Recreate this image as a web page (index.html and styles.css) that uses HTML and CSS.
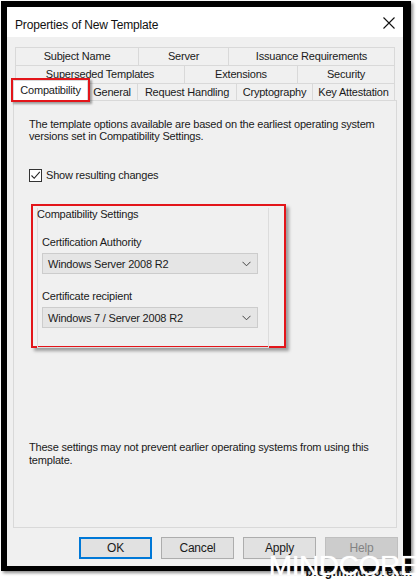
FILE: index.html
```html
<!DOCTYPE html>
<html>
<head>
<meta charset="utf-8">
<link rel="stylesheet" href="styles.css">
</head>
<body>
<div class="screen">
  <div class="frame">
    <div class="dialog">
      <div class="titlebar">
        <span class="title">Properties of New Template</span>
        <svg class="close" width="12" height="12" viewBox="0 0 12 12"><path d="M0.5 0.5L11.5 11.5M11.5 0.5L0.5 11.5" stroke="#111" stroke-width="1.1" fill="none"/></svg>
      </div>
      <div class="body">
        <div class="tabs">
          <div class="tabrow r1">
            <div class="tab">Subject Name</div>
            <div class="tab">Server</div>
            <div class="tab">Issuance Requirements</div>
          </div>
          <div class="tabrow r2">
            <div class="tab">Superseded Templates</div>
            <div class="tab">Extensions</div>
            <div class="tab">Security</div>
          </div>
          <div class="tabrow r3">
            <div class="tab sel">Compatibility</div>
            <div class="tab">General</div>
            <div class="tab">Request Handling</div>
            <div class="tab">Cryptography</div>
            <div class="tab">Key Attestation</div>
          </div>
        </div>
        <div class="page">
          <p class="intro">The template options available are based on the earliest operating system versions set in Compatibility Settings.</p>
          <div class="check">
            <span class="box"><svg width="11" height="11" viewBox="0 0 11 11"><path d="M1.5 5.5L4.2 8.3L9.8 1.8" stroke="#222" stroke-width="1.1" fill="none"/></svg></span>
            <span>Show resulting changes</span>
          </div>
          <div class="marked">
            <div class="group">
              <div class="legend">Compatibility Settings</div>
              <div class="field-label">Certification Authority</div>
              <div class="select"><span>Windows Server 2008 R2</span><svg width="9" height="6" viewBox="0 0 9 6"><path d="M0.5 0.8L4.5 4.8L8.5 0.8" stroke="#444" stroke-width="1" fill="none"/></svg></div>
              <div class="field-label second">Certificate recipient</div>
              <div class="select"><span>Windows 7 / Server 2008 R2</span><svg width="9" height="6" viewBox="0 0 9 6"><path d="M0.5 0.8L4.5 4.8L8.5 0.8" stroke="#444" stroke-width="1" fill="none"/></svg></div>
            </div>
          </div>
          <p class="note">These settings may not prevent earlier operating systems from using this template.</p>
        </div>
        <div class="buttons">
          <div class="btn default">OK</div>
          <div class="btn">Cancel</div>
          <div class="btn">Apply</div>
          <div class="btn disabled">Help</div>
        </div>
      </div>
    </div>
  </div>
  <div class="watermark">
    <span class="wm-sub">blog.mindcore.dk</span>
    <span class="wm-main">MINDCORE</span>
  </div>
</div>
</body>
</html>
```
FILE: styles.css
```css
* { box-sizing: border-box; }
html, body { margin: 0; padding: 0; background: #fff; }
body {
  font-family: "Liberation Sans", Arial, sans-serif;
  font-size: 11px;
  letter-spacing: -0.2px;
  color: #1a1a1a;
}
.screen { position: relative; width: 419px; height: 580px; overflow: hidden; }
.frame {
  margin: 1px 0 0 1px;
  width: 410px;
  height: 570px;
  border: 6px solid #000;
  border-right-width: 8px;
  border-bottom-width: 5px;
  box-shadow: 2px 2px 3px rgba(0,0,0,0.45);
}
.dialog {
  width: 100%;
  height: 100%;
  background: #f0f0f0;
  display: flex;
  flex-direction: column;
}
.titlebar {
  height: 30px;
  background: #fff;
  display: flex;
  align-items: flex-start;
  justify-content: space-between;
  padding: 11px 8px 0 8px;
  flex: none;
}
.title { font-size: 12px; letter-spacing: -0.15px; line-height: 14px; color: #111; }
.close { margin-top: -1px; }
.body {
  flex: 1;
  display: flex;
  flex-direction: column;
  padding: 10px 6px 0 6px;
}
.tabs { display: flex; flex-direction: column; padding-left: 2px; }
.tabrow { display: flex; height: 18px; }
.tab {
  height: 18px;
  border-top: 1px solid #d9d9d9;
  border-right: 1px solid #d9d9d9;
  background: #f0f0f0;
  text-align: center;
  line-height: 17px;
  white-space: nowrap;
}
.tab:first-child { border-left: 1px solid #d9d9d9; }
.r1 .tab:nth-child(1) { width: 124px; }
.r1 .tab:nth-child(2) { width: 90px; }
.r1 .tab:nth-child(3) { width: 166px; }
.r2 .tab:nth-child(1) { width: 170px; }
.r2 .tab:nth-child(2) { width: 113px; }
.r2 .tab:nth-child(3) { width: 97px; }
.r3 .tab:nth-child(1) { width: 72px; }
.r3 .tab:nth-child(2) { width: 51px; }
.r3 .tab:nth-child(3) { width: 99px; }
.r3 .tab:nth-child(4) { width: 76px; }
.r3 .tab:nth-child(5) { width: 82px; }
.r3 .tab.sel {
  position: relative;
  z-index: 2;
  width: 75px;
  height: 21px;
  margin: -3px -1px -1px -2px;
  background: #fff;
  border: 1px solid #d9d9d9;
  border-bottom: none;
  line-height: 19px;
}
.tab.sel::after {
  content: "";
  position: absolute;
  left: -3px; top: -3px; right: -3px; bottom: -1px;
  border: 2px solid #e3151a;
  box-shadow: 2px 2px 2px rgba(0,0,0,0.35);
}
.page {
  margin-top: -1px;
  height: 428px;
  border: 1px solid #d9d9d9;
  background: #f0f0f0;
  padding: 17px 15px 0 15px;
  display: flex;
  flex-direction: column;
  align-items: flex-start;
}
.intro, .note { margin: 0; line-height: 12px; width: 350px; }
.check {
  margin-top: 26px;
  display: flex;
  align-items: center;
  gap: 4px;
  height: 14px;
}
.box {
  width: 13px; height: 13px;
  border: 1px solid #333;
  background: #fff;
  display: flex; align-items: center; justify-content: center;
}
.marked {
  margin-top: 22px;
  margin-left: 2px;
  width: 255px;
  height: 144px;
  border: 2px solid #e3151a;
  box-shadow: 3px 3px 3px rgba(0,0,0,0.35);
  padding: 0 0 0 4px;
}
.group {
  width: 232px;
  height: 140px;
  margin-top: 2px;
  border: 1px solid #dcdcdc;
  border-top: none;
  padding: 0 0 0 4px;
}
.legend { line-height: 12px; margin-left: -5px; margin-top: 1px; }
.field-label { margin-top: 16px; line-height: 12px; }
.field-label.second { margin-top: 16px; }
.select {
  margin-top: 5px;
  width: 216px;
  height: 21px;
  background: #e5e5e5;
  border: 1px solid #cccccc;
  display: flex;
  align-items: center;
  justify-content: space-between;
  padding: 0 6px 0 5px;
}
.note { margin-top: auto; margin-bottom: 60px; line-height: 13px; }
.buttons {
  display: flex;
  justify-content: flex-end;
  gap: 9px;
  padding-top: 9px;
  margin-right: -1px;
}
.btn {
  width: 73px;
  height: 22px;
  background: #e1e1e1;
  border: 1px solid #adadad;
  text-align: center;
  line-height: 20px;
  font-size: 12px;
}
.btn.default { border: 2px solid #0078d7; line-height: 18px; }
.btn.disabled { background: #cccccc; border-color: #bfbfbf; color: #838383; }
.watermark {
  position: absolute;
  right: 1px;
  top: 555px;
  width: 156px;
  height: 25px;
}
.wm-sub {
  position: absolute;
  right: 6px;
  top: 11px;
  font-size: 12px;
  line-height: 13px;
  font-weight: bold;
  color: #111;
  letter-spacing: 0.4px;
}
.wm-main {
  position: absolute;
  right: 0;
  top: -3px;
  font-family: "Liberation Sans", Arial, sans-serif;
  font-size: 28px;
  line-height: 28px;
  letter-spacing: -0.4px;
  color: #fff;
  text-shadow: 0 0 1px rgba(255,255,255,0.8);
}
```
